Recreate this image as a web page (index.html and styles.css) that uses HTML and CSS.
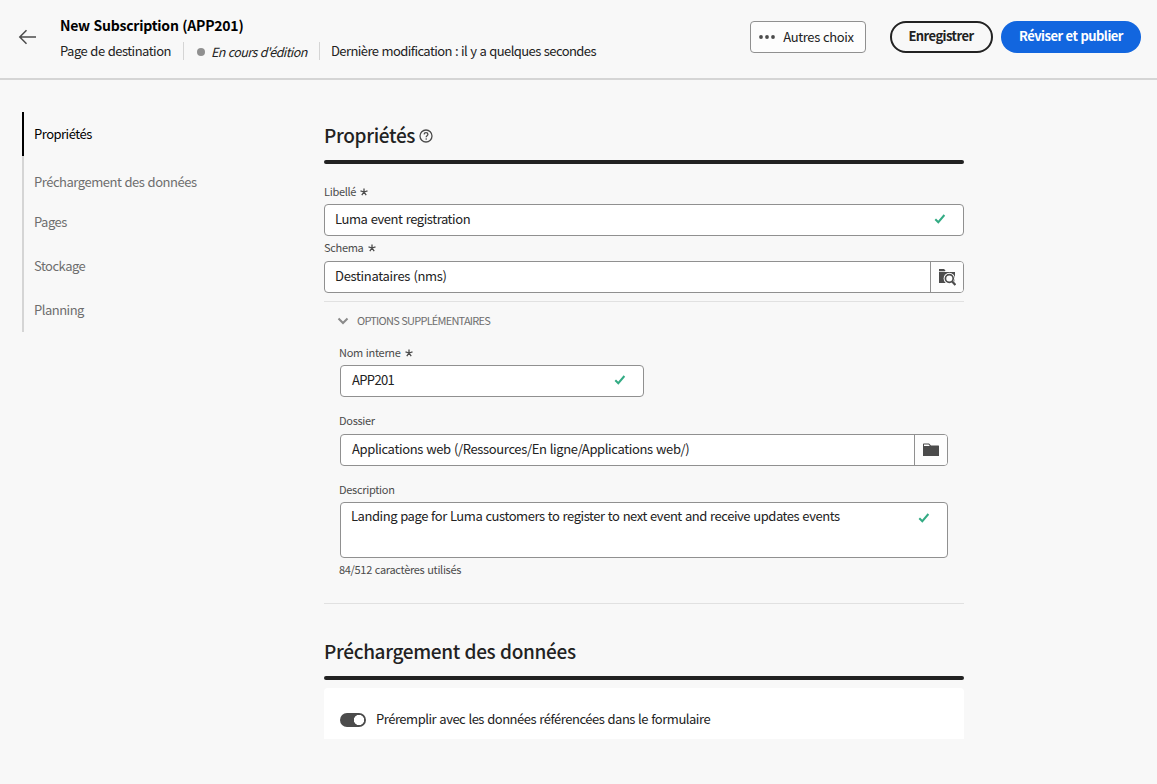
FILE: index.html
```html
<!DOCTYPE html>
<html lang="fr">
<head>
<meta charset="utf-8">
<title>New Subscription (APP201)</title>
<link rel="stylesheet" href="styles.css">
</head>
<body>
<header class="header">
  <svg class="back" width="20" height="18" viewBox="0 0 20 18"><path d="M18 9H2M8.500 2.200L1.800 9l6.700 6.800" fill="none" stroke="#4b4b4b" stroke-width="1.500"/></svg>
  <div class="titles">
    <h1 class="title"><span>New Subscription (APP201)</span></h1>
    <div class="meta">
      <span class="meta-type">Page de destination</span>
      <span class="meta-status"><i class="dot"></i><em>En cours d'édition</em></span>
      <span class="meta-date">Dernière modification : il y a quelques secondes</span>
    </div>
  </div>
  <div class="actions">
    <button class="btn btn-more"><svg width="16" height="4" viewBox="0 0 16 4" fill="#4b4b4b"><circle cx="2" cy="2" r="1.9"/><circle cx="8" cy="2" r="1.9"/><circle cx="14" cy="2" r="1.9"/></svg><span>Autres choix</span></button>
    <button class="btn btn-save"><span>Enregistrer</span></button>
    <button class="btn btn-publish"><span>Réviser et publier</span></button>
  </div>
</header>
<div class="layout">
  <nav class="nav">
    <a class="nav-item active"><span>Propriétés</span></a>
    <a class="nav-item tall"><span>Préchargement des données</span></a>
    <a class="nav-item short"><span>Pages</span></a>
    <a class="nav-item"><span>Stockage</span></a>
    <a class="nav-item"><span>Planning</span></a>
  </nav>
  <main class="main">
    <h2 class="heading"><span>Propriétés</span><svg width="14" height="14" viewBox="0 0 14 14" fill="none" stroke="#4b4b4b"><circle cx="7" cy="7" r="6" stroke-width="1.3"/><path d="M5.100 5.400C5.200 4.200 6 3.700 7 3.700c1.200 0 1.900.7 1.900 1.600 0 1.300-1.700 1.400-1.700 2.700v.2" stroke-width="1.300"/><circle cx="7.200" cy="10" r=".8" fill="#4b4b4b" stroke="none"/></svg></h2>
    <div class="rule"></div>
    <div class="field field-label">
      <label class="label"><span>Libellé</span><svg class="star" viewBox="0 0 8 8"><path d="M4 4V.4M4 4L.5 2.900M4 4l3.500-1.100M4 4L1.800 7.200M4 4l2.200 3.200"/></svg></label>
      <div class="input"><span class="v-luma">Luma event registration</span><svg class="check" viewBox="0 0 12 10"><path d="M1.300 5.200l3 3L10.400 1"/></svg></div>
    </div>
    <div class="field field-schema">
      <label class="label"><span>Schema</span><svg class="star" viewBox="0 0 8 8"><path d="M4 4V.4M4 4L.5 2.900M4 4l3.500-1.100M4 4L1.800 7.200M4 4l2.200 3.200"/></svg></label>
      <div class="input picker"><span class="v-dest">Destinataires (nms)</span><button class="pick"><svg width="18" height="18" viewBox="0 0 18 18"><path d="M1 1h5l1.500 1.500L6.800 3.200H1z" fill="#4b4b4b"/><path d="M1 4h16v11H1z" fill="#4b4b4b"/><circle cx="11.300" cy="10.500" r="5.700" fill="#fdfdfd"/><path d="M14 13.500l3.500 3.500" stroke="#fdfdfd" stroke-width="4"/><circle cx="11.300" cy="10.500" r="3.900" fill="none" stroke="#4b4b4b" stroke-width="1.700"/><path d="M14.200 13.500l3.200 3.500" stroke="#4b4b4b" stroke-width="2.200"/></svg></button></div>
    </div>
    <section class="options">
      <div class="options-title"><svg width="12" height="8" viewBox="0 0 12 8"><path d="M1.500 1.500L6 6l4.500-4.500" fill="none" stroke="#8a8a8a" stroke-width="2"/></svg><span>OPTIONS SUPPLÉMENTAIRES</span></div>
      <div class="field field-name">
        <label class="label"><span>Nom interne</span><svg class="star" viewBox="0 0 8 8"><path d="M4 4V.4M4 4L.5 2.900M4 4l3.500-1.100M4 4L1.800 7.200M4 4l2.200 3.200"/></svg></label>
        <div class="input"><span class="v-app">APP201</span><svg class="check" viewBox="0 0 12 10"><path d="M1.300 5.200l3 3L10.400 1"/></svg></div>
      </div>
      <div class="field field-folder">
        <label class="label"><span>Dossier</span></label>
        <div class="input picker"><span class="v-web">Applications web (/Ressources/En ligne/Applications web/)</span><button class="pick"><svg width="16" height="14" viewBox="0 0 16 14"><path d="M0 3V1.200Q0 .5.700.5H6l2 2h7.500q.5 0 .5.500v10H0z" fill="#4b4b4b"/><path d="M1 1.500h4.600l1.200 1.400H1z" fill="#fff"/></svg></button></div>
      </div>
      <div class="field field-desc">
        <label class="label"><span>Description</span></label>
        <div class="input area"><span class="v-desc">Landing page for Luma customers to register to next event and receive updates events</span><svg class="check" viewBox="0 0 12 10"><path d="M1.300 5.200l3 3L10.400 1"/></svg></div>
        <div class="count"><span>84/512 caractères utilisés</span></div>
      </div>
    </section>
    <h2 class="heading second"><span>Préchargement des données</span></h2>
    <div class="rule"></div>
    <div class="card"><i class="toggle"></i><span>Préremplir avec les données référencées dans le formulaire</span></div>
  </main>
</div>
</body>
</html>
```
FILE: styles.css
```css
* { box-sizing: border-box; }
body {
  margin: 0;
  height: 784px;
  overflow: hidden;
  background: #f8f8f8;
  color: #222;
  font: 13px/20px "Noto Sans CJK SC", "Noto Sans", sans-serif;
  white-space: nowrap;
  word-spacing: 0.7px;
}
svg { display: block; flex: none; }
h1, h2 { margin: 0; }
button { font: inherit; color: inherit; margin: 0; word-spacing: inherit; }

.header {
  display: flex;
  height: 80px;
  border-bottom: 2px solid #d5d5d5;
  padding: 15px 16px 0 18px;
}
.back { margin-top: 13px; }
.titles { margin-left: 22px; }
.title { font-size: 14px; line-height: 20px; font-weight: 700; color: #000; letter-spacing: -0.23px; }
.meta { display: flex; margin-top: 7px; height: 18px; line-height: 18px; letter-spacing: -0.51px; }
.meta-type { width: 123px; }
.meta-status { display: flex; align-items: center; width: 136px; border-left: 1px solid #d5d5d5; padding-left: 13px; font-size: 12.5px; letter-spacing: -0.58px; }
.meta-status em { padding-top: 1px; }
.meta-date { border-left: 1px solid #d5d5d5; padding-left: 11px; letter-spacing: -0.57px; }
.dot { flex: none; width: 8px; height: 8px; border-radius: 50%; background: #909090; margin: 2px 6px 0 0; }
.actions { display: flex; margin: 6px 0 0 auto; }
.btn { display: flex; align-items: center; justify-content: center; height: 32px; padding: 0; font-weight: 700; letter-spacing: -0.55px; }
.btn-more { width: 116px; border: 1px solid #909090; border-radius: 4px; background: #fdfdfd; font-weight: 400; gap: 8px; margin-right: 24px; letter-spacing: -0.38px; padding-right: 3px; }
.btn-save { width: 103px; border: 2px solid #222; border-radius: 16px; background: transparent; margin-right: 8px; padding-bottom: 2px; }
.btn-save span { margin-right: 1px; }
.btn-publish { width: 140px; border: 0; border-radius: 16px; background: #1266df; color: #fff; padding-bottom: 2px; }

.layout { display: flex; padding: 32px 0 0 22px; }
.nav { width: 302px; height: 220px; flex: none; letter-spacing: -0.5px; }
.nav-item { display: flex; align-items: center; height: 44px; border-left: 2px solid #d5d5d5; padding-left: 10px; color: #6e6e6e; }
.nav-item.active { border-color: #000; color: #000; }
.nav-item.tall { height: 52px; letter-spacing: -0.47px; }
.nav-item.short { height: 36px; padding-bottom: 8px; }
.main { width: 640px; }
.heading { display: flex; align-items: center; gap: 4px; height: 48px; font-size: 19px; line-height: 28px; font-weight: 500; letter-spacing: -0.33px; }
.heading span { padding-bottom: 2px; }
.rule { height: 4px; border-radius: 2px; background: #222; }

.label { display: flex; align-items: center; gap: 4px; font-size: 11px; line-height: 16px; height: 16px; color: #4b4b4b; letter-spacing: -0.3px; }
.label span { padding-bottom: 2px; }
.star { width: 8px; height: 8px; fill: none; stroke: #4b4b4b; stroke-width: 1.3; }
.input { display: flex; align-items: center; justify-content: space-between; height: 32px; border: 1px solid #909090; border-radius: 4px; background: #fff; padding: 0 17px 2px 10px; }
.check { width: 12px; height: 10px; fill: none; stroke: #33ab84; stroke-width: 2; }
.picker { padding: 0 0 0 10px; align-items: stretch; line-height: 28px; overflow: hidden; }
.pick { display: flex; align-items: center; justify-content: center; width: 33px; border: 0; border-left: 1px solid #909090; background: #fdfdfd; padding: 0; }
.v-luma { letter-spacing: -0.43px; }
.v-dest { letter-spacing: -0.31px; }
.v-app { letter-spacing: -0.65px; padding-left: 1px; }
.v-web { letter-spacing: -0.36px; }
.v-desc { letter-spacing: -0.45px; }
.field-label { padding-top: 20px; }
.field-label .label { margin-bottom: 4px; }
.field-schema { padding-top: 4px; }
.field-schema .label { margin-bottom: 5px; }

.options { margin-top: 8px; border-top: 1px solid #e1e1e1; border-bottom: 1px solid #e1e1e1; height: 303px; padding: 11px 16px 0 15px; }
.options-title { display: flex; align-items: center; gap: 8px; height: 16px; margin-left: -2px; font-size: 11px; color: #6e6e6e; letter-spacing: -0.77px; }
.options-title span { padding-bottom: 2px; }
.options .input { margin-left: 1px; }
.field-name { padding-top: 16px; }
.field-name .label { margin-bottom: 4px; }
.field-name .input { width: 304px; }
.field-folder { padding-top: 16px; }
.field-folder .label { margin-bottom: 5px; }
.field-folder .picker { padding-left: 11px; }
.field-desc { padding-top: 16px; }
.field-desc .label { margin-bottom: 4px; }
.area { height: 56px; align-items: flex-start; padding-top: 3px; }
.area .check { margin-top: 7px; }
.count { margin-top: 3px; font-size: 11px; line-height: 16px; color: #4b4b4b; letter-spacing: -0.32px; }
.second { margin-top: 24px; }
.card { display: flex; align-items: center; gap: 10px; height: 51px; margin-top: 8px; padding: 12px 16px 0; background: #fff; border-radius: 4px 4px 0 0; letter-spacing: -0.47px; }
.card span { padding-bottom: 2px; }
.toggle { width: 26px; height: 14px; border-radius: 7px; background: radial-gradient(circle at 19px 7px, #fff 4.8px, #4b4b4b 5.4px); }
```
